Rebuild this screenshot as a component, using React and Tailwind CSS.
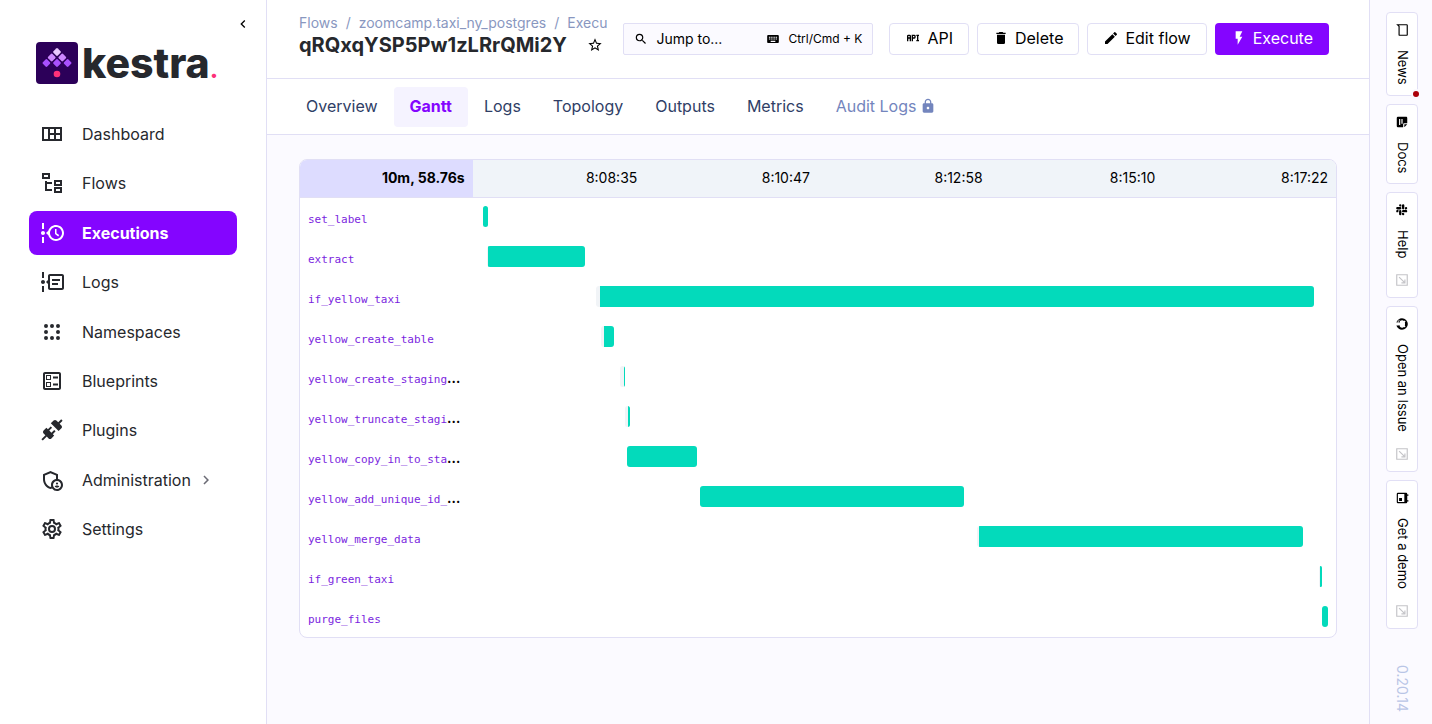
import React from "react";
import {
  MdChevronLeft, MdChevronRight, MdSearch, MdStarOutline, MdKeyboard, MdEdit, MdFlashOn, MdLock,
  MdOutlineAdminPanelSettings,
} from "react-icons/md";

const paths = {
  dashboard: "M2 5v14h20V5H2m6 12H4V7h4v10m6 0h-4v-4h4v4m0-6h-4V7h4v4m6 6h-4v-4h4v4m0-6h-4V7h4v4z",
  flows: "M12 13H7v5h5v2H5V10h2v1h5v2M8 4v2H4V4h4m2-2H2v6h8V2m10 9v2h-4v-2h4m2-2h-8v6h8V9m-2 9v2h-4v-2h4m2-2h-8v6h8v-6z",
  executions: "M4 2v6H2V2h2M2 22v-6h2v6H2m3-10c0 1.11-.89 2-2 2s-2-.89-2-2 .89-2 2-2 2 .9 2 2m11-8c4.42 0 8 3.58 8 8s-3.58 8-8 8c-3.6 0-6.65-2.38-7.65-5.65L6 12l2.35-2.34C9.35 6.38 12.4 4 16 4m0 2c-3.31 0-6 2.69-6 6s2.69 6 6 6 6-2.69 6-6-2.69-6-6-6m-1 2v5l3.2 2.4 1-1.3-2.7-1.9V8H15z",
  logs: "M5 12c0 1.11-.89 2-2 2s-2-.89-2-2 .9-2 2-2 2 .9 2 2M4 2v6H2V2h2m0 14v6H2v-6h2M24 6v12c0 1.11-.89 2-2 2H10c-1.11 0-2-.89-2-2v-4l-2-2 2-2V6c0-1.11.89-2 2-2h12c1.11 0 2 .89 2 2m-2 0H10v12h12V6m-10 3h8v2h-8V9m0 4h6v2h-6v-2z",
  namespaces: "M6 4a2 2 0 1 0 0 4 2 2 0 0 0 0-4m6 0a2 2 0 1 0 0 4 2 2 0 0 0 0-4m6 0a2 2 0 1 0 0 4 2 2 0 0 0 0-4M6 10a2 2 0 1 0 0 4 2 2 0 0 0 0-4m12 0a2 2 0 1 0 0 4 2 2 0 0 0 0-4M6 16a2 2 0 1 0 0 4 2 2 0 0 0 0-4m6 0a2 2 0 1 0 0 4 2 2 0 0 0 0-4m6 0a2 2 0 1 0 0 4 2 2 0 0 0 0-4z",
  blueprints: "M13 7.5h5v2h-5v-2m0 7h5v2h-5v-2M19 3H5c-1.1 0-2 .9-2 2v14c0 1.1.9 2 2 2h14c1.1 0 2-.9 2-2V5c0-1.1-.9-2-2-2m0 16H5V5h14v14M11 6H6v5h5V6m-1 4H7V7h3v3m1 3H6v5h5v-5m-1 4H7v-3h3v3z",
  plugins: "M21.4 7.5c.8.8.8 2.1 0 2.8l-2.8 2.8-7.8-7.8 2.8-2.8c.8-.8 2.1-.8 2.8 0l1.8 1.8 3-3 1.4 1.4-3 3 1.8 1.8m-5.8 5.8l-1.4-1.4-2.8 2.8-2.1-2.1 2.8-2.8-1.4-1.4-2.8 2.8-1.5-1.4-2.8 2.8c-.8.8-.8 2.1 0 2.8l1.8 1.8-4 4 1.4 1.4 4-4 1.8 1.8c.8.8 2.1.8 2.8 0l2.8-2.8-1.4-1.4 2.8-2.9z",
  settings: "M12 8a4 4 0 0 1 4 4 4 4 0 0 1-4 4 4 4 0 0 1-4-4 4 4 0 0 1 4-4m0 2a2 2 0 0 0-2 2 2 2 0 0 0 2 2 2 2 0 0 0 2-2 2 2 0 0 0-2-2m-2 12c-.25 0-.46-.18-.5-.42l-.37-2.65c-.63-.25-1.17-.59-1.69-.99l-2.49 1.01c-.22.08-.49 0-.61-.22l-2-3.46a.493.493 0 0 1 .12-.64l2.11-1.66L4.5 12l.07-1-2.11-1.63a.493.493 0 0 1-.12-.64l2-3.46c.12-.22.39-.31.61-.22l2.49 1c.52-.39 1.06-.73 1.69-.98l.37-2.65c.04-.24.25-.42.5-.42h4c.25 0 .46.18.5.42l.37 2.65c.63.25 1.17.59 1.69.98l2.49-1c.22-.09.49 0 .61.22l2 3.46c.13.22.07.49-.12.64L19.43 11l.07 1-.07 1 2.11 1.63c.19.15.25.42.12.64l-2 3.46c-.12.22-.39.31-.61.22l-2.49-1c-.52.39-1.06.73-1.69.98l-.37 2.65c-.04.24-.25.42-.5.42h-4m1.25-18l-.37 2.61c-1.2.25-2.26.89-3.03 1.78L5.44 7.35l-.75 1.3L6.8 10.2a5.55 5.55 0 0 0 0 3.6l-2.12 1.56.75 1.3 2.43-1.04c.77.88 1.82 1.52 3.01 1.76l.37 2.62h1.52l.37-2.61c1.19-.25 2.24-.89 3.01-1.77l2.43 1.04.75-1.3-2.12-1.55c.4-1.17.4-2.44 0-3.61l2.11-1.55-.75-1.3-2.41 1.04a5.42 5.42 0 0 0-3.03-1.77L12.75 4h-1.5z",
  api: "M7 7H5a2 2 0 0 0-2 2v8h2v-4h2v4h2V9a2 2 0 0 0-2-2m0 4H5V9h2m7-2h-4v10h2v-4h2a2 2 0 0 0 2-2V9a2 2 0 0 0-2-2m0 4h-2V9h2m6 0v6h1v2h-4v-2h1V9h-1V7h4v2z",
  trash: "M19 4h-3.5l-1-1h-5l-1 1H5v2h14M6 19a2 2 0 0 0 2 2h8a2 2 0 0 0 2-2V7H6v12z",
  message: "M20 2H4a2 2 0 0 0-2 2v18l4-4h14a2 2 0 0 0 2-2V4c0-1.1-.9-2-2-2m0 14H5.2L4 17.2V4h16v12z",
  note: "M5 21a2 2 0 0 1-2-2V5c0-1.100.9-2 2-2h9v5a2 2 0 0 0 2 2h5v9a2 2 0 0 1-2 2H5m2-4h10v-2H7v2m0-4h8v-2H7v2m9-10 5 5h-5V3z",
  slack: "M6 15a2 2 0 0 1-2 2 2 2 0 0 1-2-2 2 2 0 0 1 2-2h2v2m1 0a2 2 0 0 1 2-2 2 2 0 0 1 2 2v5a2 2 0 0 1-2 2 2 2 0 0 1-2-2v-5m2-8a2 2 0 0 1-2-2 2 2 0 0 1 2-2 2 2 0 0 1 2 2v2H9m0 1a2 2 0 0 1 2 2 2 2 0 0 1-2 2H4a2 2 0 0 1-2-2 2 2 0 0 1 2-2h5m8 2a2 2 0 0 1 2-2 2 2 0 0 1 2 2 2 2 0 0 1-2 2h-2v-2m-1 0a2 2 0 0 1-2 2 2 2 0 0 1-2-2V5a2 2 0 0 1 2-2 2 2 0 0 1 2 2v5m-2 8a2 2 0 0 1 2 2 2 2 0 0 1-2 2 2 2 0 0 1-2-2v-2h2m0-1a2 2 0 0 1-2-2 2 2 0 0 1 2-2h5a2 2 0 0 1 2 2 2 2 0 0 1-2 2h-5z",
  github: "M12 2A10 10 0 0 0 2 12c0 4.42 2.87 8.17 6.84 9.5.5.08.66-.23.66-.5v-1.69c-2.77.6-3.36-1.34-3.36-1.34-.46-1.16-1.11-1.47-1.11-1.47-.91-.62.07-.6.07-.6 1 .07 1.53 1.03 1.53 1.03.87 1.52 2.34 1.07 2.91.83.09-.65.35-1.09.63-1.34-2.22-.25-4.55-1.11-4.55-4.92 0-1.11.38-2 1.03-2.71-.1-.25-.45-1.29.1-2.64 0 0 .84-.27 2.75 1.02.79-.22 1.65-.33 2.5-.33s1.71.11 2.5.33c1.91-1.29 2.75-1.02 2.75-1.02.55 1.35.2 2.39.1 2.64.65.71 1.03 1.6 1.03 2.71 0 3.82-2.34 4.66-4.57 4.91.36.31.69.92.69 1.85V21c0 .27.16.59.67.5C19.14 20.16 22 16.42 22 12A10 10 0 0 0 12 2z",
  calendar: "M19 19H5V8h14m-3-7v2H8V1H6v2H5a2 2 0 0 0-2 2v14a2 2 0 0 0 2 2h14a2 2 0 0 0 2-2V5a2 2 0 0 0-2-2h-1V1m-1 11h-5v5h5v-5z",
  external: "M2 2v20h20V2H2m2 2h16v16H4V4m7 2v2h3.600l-8.300 8.300 1.400 1.400L16 9.400V13h2V6h-7z",
};

function Icon({ name, className }) {
  return (
    <svg viewBox="0 0 24 24" fill="currentColor" aria-hidden="true" className={`shrink-0 ${className}`}>
      <path fillRule="evenodd" d={paths[name]} />
    </svg>
  );
}

const nav = [
  { label: "Dashboard", icon: "dashboard" },
  { label: "Flows", icon: "flows" },
  { label: "Executions", icon: "executions", active: true },
  { label: "Logs", icon: "logs" },
  { label: "Namespaces", icon: "namespaces" },
  { label: "Blueprints", icon: "blueprints" },
  { label: "Plugins", icon: "plugins" },
  { label: "Administration", expandable: true },
  { label: "Settings", icon: "settings" },
];

const tabs = ["Overview", "Gantt", "Logs", "Topology", "Outputs", "Metrics"];
const ticks = ["8:08:35", "8:10:47", "8:12:58", "8:15:10", "8:17:22"];

// Offsets on a scale of 847 units: queued at, started at, ended at.
const SPAN = 847;
const tasks = [
  { id: "set_label", queued: 2, start: 2, end: 7 },
  { id: "extract", queued: 6, start: 7, end: 104 },
  { id: "if_yellow_taxi", queued: 115, start: 119, end: 833 },
  { id: "yellow_create_table", queued: 120, start: 123, end: 133 },
  { id: "yellow_create_staging_table", queued: 139, start: 143, end: 144 },
  { id: "yellow_truncate_staging_table", queued: 144, start: 147, end: 149 },
  { id: "yellow_copy_in_to_staging_table", queued: 146, start: 146, end: 216 },
  { id: "yellow_add_unique_id_and_filename", queued: 219, start: 219, end: 483 },
  { id: "yellow_merge_data", queued: 496, start: 498, end: 822 },
  { id: "if_green_taxi", queued: 838, start: 839, end: 841 },
  { id: "purge_files", queued: 841, start: 841, end: 847 },
];

const pct = (n) => `${(n / SPAN) * 100}%`;

const diamonds = [
  { x: 21, y: 10, fill: "#e9c8ff" },
  { x: 15.7, y: 15.5, fill: "#cd88ff" },
  { x: 26.3, y: 15.5, fill: "#cd88ff" },
  { x: 10.4, y: 21, fill: "#a950ff" },
  { x: 21, y: 21, fill: "#a950ff" },
  { x: 31.6, y: 21, fill: "#a950ff" },
];

function Logo() {
  return (
    <a href="#home" aria-label="kestra" className="flex items-center gap-1 text-[#26282d]">
      <svg viewBox="0 0 42 42" className="size-[42px]" aria-hidden="true">
        <rect width="42" height="42" rx="4" fill="#2c0059" />
        {diamonds.map((d) => (
          <rect
            key={`${d.x}-${d.y}`}
            x="-3.1"
            y="-3.1"
            width="6.2"
            height="6.2"
            rx="1.2"
            fill={d.fill}
            transform={`translate(${d.x} ${d.y}) rotate(45)`}
          />
        ))}
        <circle cx="21" cy="32" r="3.3" fill="#fd3179" />
      </svg>
      <span className="pt-1 text-[41px] leading-[38px] font-extrabold">
        kestra<span className="text-2xl text-[#fd3179]">.</span>
      </span>
    </a>
  );
}

function Sidebar() {
  return (
    <aside className="flex w-[267px] shrink-0 flex-col border-r border-[#e1dff5] bg-white">
      <div className="flex h-8 items-end justify-end pr-[15px]">
        <button type="button" aria-label="Collapse menu" className="text-black">
          <MdChevronLeft className="size-4" />
        </button>
      </div>
      <div className="mt-2 pl-9">
        <Logo />
      </div>
      <nav className="mt-[26px] px-[29px]">
        <ul className="flex h-[439px] flex-col justify-between">
          {nav.map((n) => (
            <li key={n.label}>
              <a
                href={`#${n.label.toLowerCase()}`}
                className={
                  n.active
                    ? "flex h-11 items-center rounded-lg bg-[#8405ff] pl-[11px] font-bold text-white"
                    : "flex h-11 items-center rounded-lg pl-[11px] text-[#26282d]"
                }
              >
                {n.icon ? <Icon name={n.icon} className="size-6" /> : <MdOutlineAdminPanelSettings className="size-6" />}
                <span className="ml-[18px]">{n.label}</span>
                {n.expandable && <MdChevronRight className="ml-1.5 size-[18px] text-[#6b6b75]" />}
              </a>
            </li>
          ))}
        </ul>
      </nav>
    </aside>
  );
}

const actionClass = "flex h-8 items-center gap-1.5 rounded border border-[#e1dff5] bg-white px-[15px] pb-0.5 text-black";

function TopBar() {
  return (
    <header className="flex h-[79px] items-center border-b border-[#e1dff5] bg-white pr-10 pl-8">
      <div className="mr-4 min-w-0 flex-1 overflow-hidden pb-2">
        <ol className="flex gap-2 text-sm whitespace-nowrap text-[#8997bf]">
          <li><a href="#flows">Flows</a></li>
          <li>/</li>
          <li><a href="#flow">zoomcamp.taxi_ny_postgres</a></li>
          <li>/</li>
          <li><a href="#executions">Executions</a></li>
        </ol>
        <div className="flex items-center gap-5">
          <h1 className="text-xl leading-6 font-bold text-[#26282d]">qRQxqYSP5Pw1zLRrQMi2Y</h1>
          <button type="button" aria-label="Add to favourites" className="text-black">
            <MdStarOutline className="size-4" />
          </button>
        </div>
      </div>
      <button type="button" className="mr-4 flex h-8 w-[250px] items-center rounded-xs border border-[#e1dff5] bg-[#fbfaff] px-2.5 text-black">
        <MdSearch className="size-[14px]" />
        <span className="ml-2 text-sm">Jump to...</span>
        <MdKeyboard className="ml-auto size-[14px]" />
        <span className="ml-2 text-xs">Ctrl/Cmd + K</span>
      </button>
      <div className="flex gap-2">
        <button type="button" className={actionClass}>
          <Icon name="api" className="size-4" />API
        </button>
        <button type="button" className={actionClass}>
          <Icon name="trash" className="size-4" />Delete
        </button>
        <button type="button" className={actionClass}>
          <MdEdit className="size-4" />Edit flow
        </button>
        <button type="button" className="flex h-8 items-center gap-1.5 rounded bg-[#8405ff] px-4 pb-0.5 text-white">
          <MdFlashOn className="size-4" />Execute
        </button>
      </div>
    </header>
  );
}

function Tabs() {
  return (
    <nav className="flex h-14 items-center border-b border-[#e1dff5] bg-white pl-[23px]">
      {tabs.map((t) => (
        <a
          key={t}
          href={`#${t.toLowerCase()}`}
          className={
            t === "Gantt"
              ? "flex h-10 items-center rounded bg-[#f5f3ff] px-4 pb-0.5 font-bold text-[#8405ff]"
              : "flex h-10 items-center px-4 pb-0.5 text-[#2f3e66]"
          }
        >
          {t}
        </a>
      ))}
      <a href="#audit" className="flex h-10 items-center gap-1 px-4 pb-0.5 text-[#7385bd]">
        Audit Logs
        <MdLock className="size-4" />
      </a>
    </nav>
  );
}

function Gantt() {
  return (
    <div className="overflow-hidden rounded-lg border border-[#e1dff5] bg-white">
      <table className="w-full table-fixed border-collapse text-black">
        <thead>
          <tr className="h-[37px] border-b border-[#e1dff5] bg-[#f0f4f9] text-right text-sm">
            <th scope="col" className="bg-[#dddcff] px-2 py-0 text-right font-bold">10m, 58.76s</th>
            {ticks.map((t) => (
              <th key={t} scope="col" className="px-2 py-0 text-right font-normal">{t}</th>
            ))}
          </tr>
        </thead>
        <tbody>
          {tasks.map((t) => (
            <tr key={t.id} className="h-10">
              <th scope="row" className="truncate pt-0.5 pr-2.5 pb-0 pl-2 text-left text-sm font-semibold">
                <a href={`#${t.id}`} className="font-['DejaVu_Sans_Mono',monospace] text-[11px] font-normal text-[#7b1fe0]">{t.id}</a>
              </th>
              <td colSpan={5} className="px-2 pt-0 pb-0.5">
                <div className="flex h-[21px]">
                  <div style={{ width: pct(t.queued) }} />
                  <div className="flex overflow-hidden rounded-[3px] bg-[#f1f4f7]" style={{ width: pct(t.end - t.queued) }}>
                    <div
                      className="ml-auto bg-[#03dabb]"
                      style={{ width: `${((t.end - t.start) / (t.end - t.queued)) * 100}%` }}
                    />
                  </div>
                </div>
              </td>
            </tr>
          ))}
        </tbody>
      </table>
    </div>
  );
}

const railItems = [
  { label: "News", icon: "message", dot: true },
  { label: "Docs", icon: "note" },
  { label: "Help", icon: "slack", external: true },
  { label: "Open an Issue", icon: "github", external: true },
  { label: "Get a demo", icon: "calendar", external: true },
];

function Rail() {
  return (
    <aside className="flex w-[63px] shrink-0 flex-col items-start border-l border-[#e1dff5] bg-[#fbfaff] pt-3 pl-4">
      <div className="flex flex-col gap-2">
        {railItems.map((r) => (
          <button
            key={r.label}
            type="button"
            className="relative flex w-8 flex-col items-center rounded border border-[#e1dff5] bg-white py-2.5 text-[13px] text-black"
          >
            <Icon name={r.icon} className="size-[14px] rotate-90" />
            <span className="mt-[13px] [writing-mode:vertical-rl]">{r.label}</span>
            {r.external && <Icon name="external" className="mt-[15px] size-[14px] rotate-90 text-[#c4c4c8]" />}
            {r.dot && <span className="absolute -right-0.5 -bottom-0.5 size-1.5 rounded-full bg-[#ab0009] ring-2 ring-[#fbfaff]" />}
          </button>
        ))}
      </div>
      <span className="mt-9 w-8 text-sm leading-8 text-[#b9c5e6] [writing-mode:vertical-rl]">0.20.14</span>
    </aside>
  );
}

export default function App() {
  return (
    <div className="flex min-h-screen bg-[#fbfaff] font-[Inter,sans-serif] text-base">
      <Sidebar />
      <div className="flex min-w-0 flex-1 flex-col">
        <TopBar />
        <Tabs />
        <main className="px-8 py-6">
          <Gantt />
        </main>
      </div>
      <Rail />
    </div>
  );
}
